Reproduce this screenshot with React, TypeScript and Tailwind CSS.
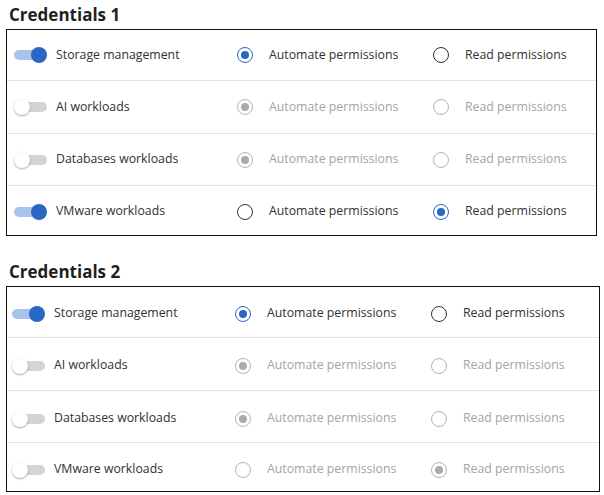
import React from 'react';

type Row = {
  label: string;
  on: boolean;
  choice: 'auto' | 'read';
  disabled: boolean;
};

const box1: Row[] = [
  { label: 'Storage management', on: true, choice: 'auto', disabled: false },
  { label: 'AI workloads', on: false, choice: 'auto', disabled: true },
  { label: 'Databases workloads', on: false, choice: 'auto', disabled: true },
  { label: 'VMware workloads', on: true, choice: 'read', disabled: false },
];

const box2: Row[] = [
  { label: 'Storage management', on: true, choice: 'auto', disabled: false },
  { label: 'AI workloads', on: false, choice: 'auto', disabled: true },
  { label: 'Databases workloads', on: false, choice: 'auto', disabled: true },
  { label: 'VMware workloads', on: false, choice: 'read', disabled: true },
];

// row heights incl. divider, top to bottom
const rowH = ['h-[51px] border-b', 'h-[53px] border-b', 'h-[52px] border-b', 'h-[49px] pt-[2px]'];
const rowH2 = ['h-[51px] border-b pt-[3px]', 'h-[53px] border-b pt-[3px]', 'h-[52px] border-b pt-[4px]', 'h-[48px] pt-[5px]'];

function Toggle({ on }: { on: boolean }) {
  return (
    <div className="relative w-[33px] h-4 shrink-0">
      {on ? (
        <>
          <div className="absolute left-0 top-[3px] w-[28px] h-[10px] rounded-full bg-[#a9c3ec]" />
          <div className="absolute right-0 top-0 w-4 h-4 rounded-full bg-[#2a67c5]" />
        </>
      ) : (
        <>
          <div className="absolute right-0 top-[3px] w-[28px] h-[10px] rounded-full bg-[#d4d4d4]" />
          <div className="absolute left-0 top-0 w-4 h-4 rounded-full bg-white shadow-[0_1px_2px_rgba(0,0,0,0.35)]" />
        </>
      )}
    </div>
  );
}

function Radio({ checked, disabled, label }: { checked: boolean; disabled: boolean; label: string }) {
  const ring = disabled ? 'border-[#b3b3b3]' : checked ? 'border-[#2a67c5]' : 'border-[#333333]';
  const dot = disabled ? 'bg-[#ababab]' : 'bg-[#2a67c5]';
  return (
    <div className="flex items-center">
      <div className={`w-4 h-4 rounded-full border-[1.5px] ${ring} flex items-center justify-center shrink-0`}>
        {checked && <div className={`w-2 h-2 rounded-full ${dot}`} />}
      </div>
      <span className={`ml-4 ${disabled ? 'text-[#a6a4a2]' : 'text-[#323130]'}`}>{label}</span>
    </div>
  );
}

function Panel({ title, rows, wide }: { title: string; rows: Row[]; wide?: boolean }) {
  const heights = wide ? rowH2 : rowH;
  return (
    <section>
      <h2 className="h-[29px] pl-[3px] pt-[4px] text-[17px] font-bold leading-[21px] text-[#1f1f1f]">{title}</h2>
      <div className={`border border-[#111111] ${wide ? 'w-[594px]' : 'w-[591px]'}`}>
        {rows.map((r, i) => (
          <div
            key={r.label}
            className={`flex items-center border-[#e1e1e1] ${wide ? 'pl-[5px]' : 'pl-[7px]'} ${heights[i]}`}
          >
            <div className="flex items-center w-[223px]">
              <Toggle on={r.on} />
              <span className="ml-[9px] text-[#323130]">{r.label}</span>
            </div>
            <div className="w-[196px]">
              <Radio checked={r.choice === 'auto'} disabled={r.disabled} label="Automate permissions" />
            </div>
            <Radio checked={r.choice === 'read'} disabled={r.disabled} label="Read permissions" />
          </div>
        ))}
      </div>
    </section>
  );
}

export default function App() {
  return (
    <div
      className="w-[604px] h-[495px] bg-white pl-[6px] text-[12.3px]"
      style={{ fontFamily: '"Open Sans", "Noto Sans", sans-serif' }}
    >
      <Panel title="Credentials 1" rows={box1} />
      <div className="h-[21px]" />
      <Panel title="Credentials 2" rows={box2} wide />
    </div>
  );
}
